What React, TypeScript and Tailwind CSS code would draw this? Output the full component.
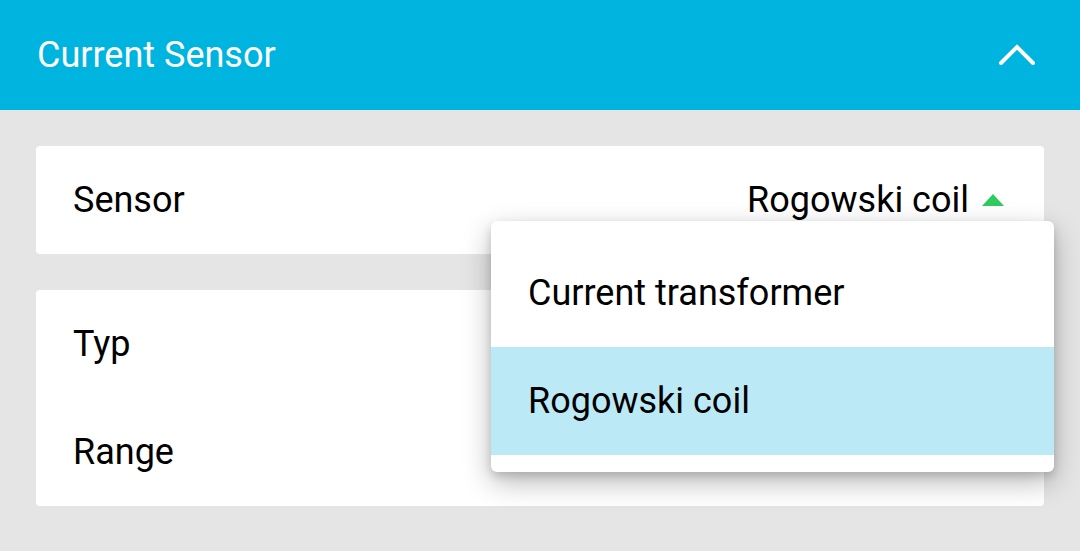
import React from "react";

export default function App() {
  return (
    <div className="w-[1080px] h-[551px] bg-[#e5e5e5] overflow-hidden relative" style={{ fontFamily: "Roboto, 'Noto Sans', sans-serif" }}>
      <div className="h-[110px] bg-[#00b4e0] flex items-center justify-between pl-[37px] pr-[45px]">
        <span className="text-white text-[36px] leading-none">Current Sensor</span>
        <svg width="36" height="22" viewBox="0 0 36 22" fill="none">
          <path d="M2 19 L18 3 L34 19" stroke="white" strokeWidth="4" strokeLinecap="round" strokeLinejoin="miter" />
        </svg>
      </div>
      <div className="px-[36px] pt-[36px] flex flex-col gap-[36px] w-[1080px]">
        <div className="bg-white rounded-[4px] h-[108px] flex items-center justify-between pl-[37px] pr-[40px]">
          <span className="text-[36px] text-black">Sensor</span>
          <div className="flex items-center gap-[13px]">
            <span className="text-[36px] text-black">Rogowski coil</span>
            <svg width="22" height="12" viewBox="0 0 22 12">
              <path d="M0 12 L11 0 L22 12 Z" fill="#2ecc5f" />
            </svg>
          </div>
        </div>
        <div className="bg-white rounded-[4px] flex flex-col">
          <div className="h-[108px] flex items-center pl-[37px]">
            <span className="text-[36px] text-black">Typ</span>
          </div>
          <div className="h-[108px] flex items-center pl-[37px]">
            <span className="text-[36px] text-black">Range</span>
          </div>
        </div>
      </div>
      <div className="absolute left-[491px] top-[221px] w-[563px] bg-white rounded-[6px] shadow-[0_10px_28px_rgba(0,0,0,0.28),0_4px_8px_rgba(0,0,0,0.14)] pt-[18px] pb-[17px] overflow-hidden">
        <div className="h-[108px] flex items-center pl-[37px]">
          <span className="text-[36px] text-black">Current transformer</span>
        </div>
        <div className="h-[108px] flex items-center pl-[37px] bg-[#bce9f6]">
          <span className="text-[36px] text-black">Rogowski coil</span>
        </div>
      </div>
    </div>
  );
}
